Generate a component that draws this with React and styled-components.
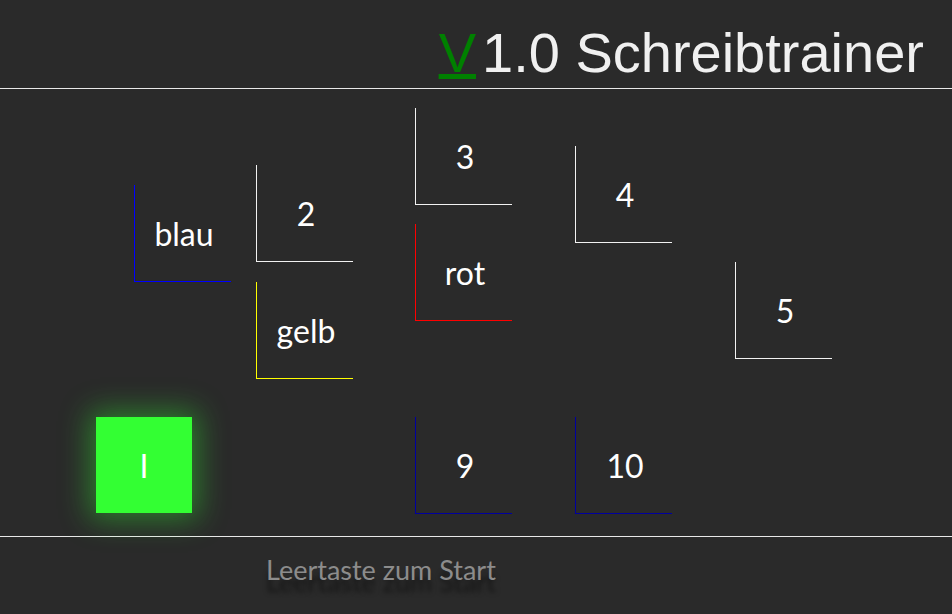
// App.jsx
import { createGlobalStyle } from "styled-components";
import styled from "styled-components";

const GlobalStyle = createGlobalStyle`
  html, body {
    margin: 0;
    padding: 0;
    background: #2a2a2a;
  }
  body {
    font-family: Lato, "Open Sans", sans-serif;
  }
`;

const Page = styled.div`
  width: 952px;
  height: 614px;
  background: #2a2a2a;
  overflow: hidden;
`;

const Header = styled.header`
  box-sizing: border-box;
  border-bottom: 1px solid #e8e8e8;
  height: 89px;
  display: flex;
  justify-content: flex-end;
  align-items: flex-start;
  padding: 21px 28px 0 0;
`;

const Title = styled.h1`
  margin: 0;
  font-family: "Liberation Sans", Arial, sans-serif;
  font-weight: normal;
  font-size: 56px;
  line-height: 64px;
  color: #f0f0f0;
  white-space: nowrap;
`;

const Version = styled.span`
  color: #008000;
  margin-right: 6px;
  text-decoration: underline;
  text-decoration-thickness: 5px;
  text-underline-offset: 2px;
`;

const Board = styled.main`
  height: 448px;
  box-sizing: border-box;
  border-bottom: 1px solid #e8e8e8;
  display: flex;
  align-items: flex-start;
`;

const Column = styled.div`
  display: flex;
  flex-direction: column;
  align-items: flex-start;
  margin-left: ${(p) => p.$left}px;
  width: 97px;
`;

const Tile = styled.div`
  box-sizing: border-box;
  width: 97px;
  height: 97px;
  margin-top: ${(p) => p.$top}px;
  margin-left: ${(p) => p.$shift || 0}px;
  border-left: 1px solid ${(p) => p.$color};
  border-bottom: 1px solid ${(p) => p.$color};
  display: flex;
  align-items: center;
  justify-content: center;
  padding-left: 2px;
  color: #ffffff;
  font-size: 32px;
  flex-shrink: 0;
`;

const ActiveTile = styled.div`
  width: 96px;
  height: 96px;
  margin-top: ${(p) => p.$top}px;
  background: #33ff33;
  box-shadow: 0 0 28px 6px rgba(51, 255, 51, 0.4);
  display: flex;
  align-items: center;
  justify-content: center;
  color: #ffffff;
  font-size: 32px;
  flex-shrink: 0;
`;

const Footer = styled.footer`
  padding: 16px 0 0 266px;
`;

const Hint = styled.p`
  margin: 0;
  font-size: 27px;
  color: #8c8c8c;
  text-shadow: 0 12px 5px rgba(0, 0, 0, 0.5);
`;

const App = () => {
  return (
    <Page>
      <GlobalStyle />
      <Header>
        <Title>
          <Version>V</Version>1.0 Schreibtrainer
        </Title>
      </Header>

      <Board>
        <Column $left={96}>
          <Tile $top={96} $shift={38} $color="#0000ff">
            blau
          </Tile>
          <ActiveTile $top={135}>I</ActiveTile>
        </Column>
        <Column $left={63}>
          <Tile $top={76} $color="#f2f2f2">
            2
          </Tile>
          <Tile $top={20} $color="#ffff00">
            gelb
          </Tile>
        </Column>
        <Column $left={62}>
          <Tile $top={19} $color="#f2f2f2">
            3
          </Tile>
          <Tile $top={19} $color="#ff0000">
            rot
          </Tile>
          <Tile $top={96} $color="#0000a0">
            9
          </Tile>
        </Column>
        <Column $left={63}>
          <Tile $top={57} $color="#f2f2f2">
            4
          </Tile>
          <Tile $top={174} $color="#0000a0">
            10
          </Tile>
        </Column>
        <Column $left={63}>
          <Tile $top={173} $color="#f2f2f2">
            5
          </Tile>
        </Column>
      </Board>

      <Footer>
        <Hint>Leertaste zum Start</Hint>
      </Footer>
    </Page>
  );
};

export default App;
